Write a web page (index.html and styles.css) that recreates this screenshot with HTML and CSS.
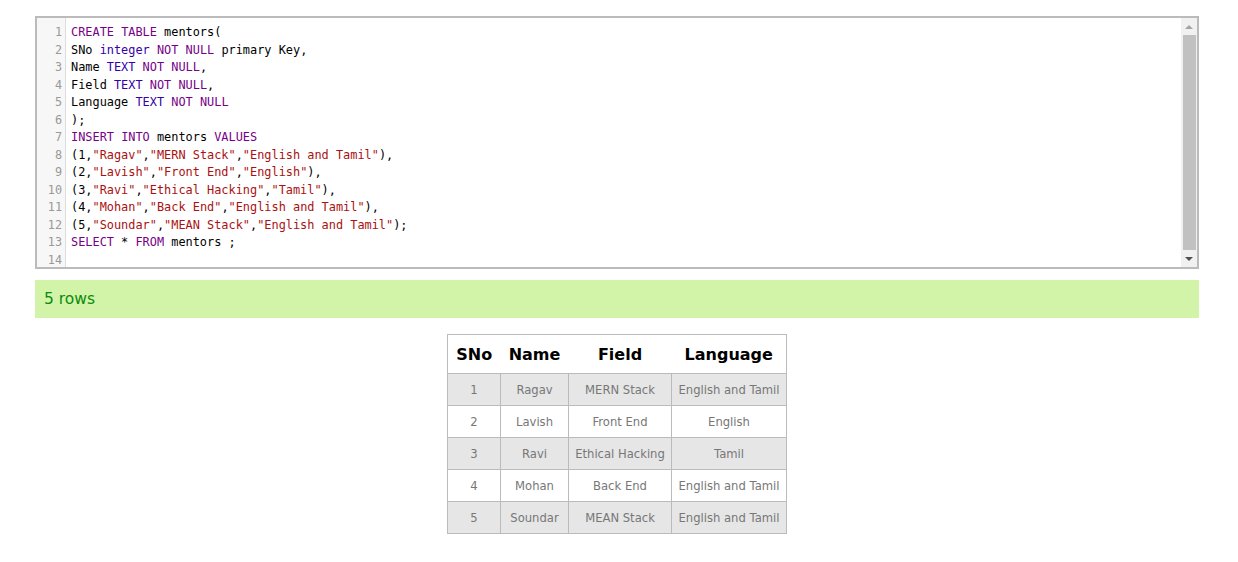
FILE: index.html
```html
<!DOCTYPE html>
<html>
<head>
<meta charset="utf-8">
<link rel="stylesheet" href="styles.css">
</head>
<body>
<div class="page">
  <div class="editor">
    <div class="gutter">
      <div>1</div><div>2</div><div>3</div><div>4</div><div>5</div><div>6</div><div>7</div><div>8</div><div>9</div><div>10</div><div>11</div><div>12</div><div>13</div><div>14</div>
    </div>
    <div class="code">
      <div class="ln"><span class="kw">CREATE</span> <span class="kw">TABLE</span> mentors(</div>
      <div class="ln">SNo <span class="ty">integer</span> <span class="kw">NOT</span> <span class="kw">NULL</span> primary Key,</div>
      <div class="ln">Name <span class="ty">TEXT</span> <span class="kw">NOT</span> <span class="kw">NULL</span>,</div>
      <div class="ln">Field <span class="ty">TEXT</span> <span class="kw">NOT</span> <span class="kw">NULL</span>,</div>
      <div class="ln">Language <span class="ty">TEXT</span> <span class="kw">NOT</span> <span class="kw">NULL</span></div>
      <div class="ln">);</div>
      <div class="ln"><span class="kw">INSERT</span> <span class="kw">INTO</span> mentors <span class="kw">VALUES</span></div>
      <div class="ln">(1,<span class="st">"Ragav"</span>,<span class="st">"MERN Stack"</span>,<span class="st">"English and Tamil"</span>),</div>
      <div class="ln">(2,<span class="st">"Lavish"</span>,<span class="st">"Front End"</span>,<span class="st">"English"</span>),</div>
      <div class="ln">(3,<span class="st">"Ravi"</span>,<span class="st">"Ethical Hacking"</span>,<span class="st">"Tamil"</span>),</div>
      <div class="ln">(4,<span class="st">"Mohan"</span>,<span class="st">"Back End"</span>,<span class="st">"English and Tamil"</span>),</div>
      <div class="ln">(5,<span class="st">"Soundar"</span>,<span class="st">"MEAN Stack"</span>,<span class="st">"English and Tamil"</span>);</div>
      <div class="ln"><span class="kw">SELECT</span> * <span class="kw">FROM</span> mentors ;</div>
      <div class="ln">&nbsp;</div>
    </div>
    <div class="scrollbar">
      <div class="arrow up"></div>
      <div class="thumb"></div>
      <div class="arrow down"></div>
    </div>
  </div>

  <div class="result">5 rows</div>

  <div class="table-wrap">
    <table class="results">
      <colgroup>
        <col class="c1"><col class="c2"><col class="c3"><col class="c4">
      </colgroup>
      <thead>
        <tr><th>SNo</th><th>Name</th><th>Field</th><th>Language</th></tr>
      </thead>
      <tbody>
        <tr class="odd"><td>1</td><td>Ragav</td><td>MERN Stack</td><td>English and Tamil</td></tr>
        <tr><td>2</td><td>Lavish</td><td>Front End</td><td>English</td></tr>
        <tr class="odd"><td>3</td><td>Ravi</td><td>Ethical Hacking</td><td>Tamil</td></tr>
        <tr><td>4</td><td>Mohan</td><td>Back End</td><td>English and Tamil</td></tr>
        <tr class="odd"><td>5</td><td>Soundar</td><td>MEAN Stack</td><td>English and Tamil</td></tr>
      </tbody>
    </table>
  </div>
</div>
</body>
</html>
```
FILE: styles.css
```css
html, body {
  margin: 0;
  padding: 0;
  background: #fff;
}
.page {
  padding: 16px 39px 0 35px;
  font-family: "DejaVu Sans", Verdana, sans-serif;
}
.editor {
  display: flex;
  height: 249px;
  border: 2px solid #bbbbbb;
  background: #fff;
  overflow: hidden;
}
.gutter {
  width: 29px;
  background: #f7f7f7;
  border-right: 1px solid #dddddd;
  padding-top: 6px;
  font-family: "DejaVu Sans Mono", "Liberation Mono", monospace;
  font-size: 11.8px;
  line-height: 17.5px;
  color: #999999;
  text-align: right;
  box-sizing: border-box;
}
.gutter div {
  padding-right: 3px;
  height: 17.5px;
}
.code {
  flex: 1;
  padding: 6px 0 0 5px;
  font-family: "DejaVu Sans Mono", "Liberation Mono", monospace;
  font-size: 11.9px;
  line-height: 17.5px;
  color: #000;
}
.ln {
  white-space: pre;
  height: 17.5px;
}
.kw { color: #770088; }
.ty { color: #3300aa; }
.st { color: #aa1111; }
.scrollbar {
  width: 16px;
  background: #f1f1f1;
  display: flex;
  flex-direction: column;
  align-items: center;
}
.arrow {
  height: 17px;
  width: 16px;
  display: flex;
  align-items: center;
  justify-content: center;
}
.arrow.up::before {
  content: "";
  border-left: 4px solid transparent;
  border-right: 4px solid transparent;
  border-bottom: 4px solid #a3a3a3;
}
.arrow.down::before {
  content: "";
  border-left: 4px solid transparent;
  border-right: 4px solid transparent;
  border-top: 4px solid #505050;
}
.thumb {
  flex: 1;
  width: 13px;
  background: #c1c1c1;
}
.result {
  margin-top: 11px;
  height: 38px;
  background: #d2f4a9;
  color: #0c8a0c;
  font-size: 15.5px;
  line-height: 38px;
  padding-left: 9px;
}
.table-wrap {
  display: flex;
  justify-content: center;
  margin-top: 16px;
}
.results {
  border-collapse: collapse;
  border: 1px solid #bbbbbb;
  table-layout: fixed;
  width: 339px;
}
.c1 { width: 53px; }
.c2 { width: 68px; }
.c3 { width: 103px; }
.c4 { width: 115px; }
.results th {
  height: 38px;
  padding: 0;
  font-size: 16px;
  font-weight: bold;
  color: #000;
  text-align: center;
  border-bottom: 1px solid #bbbbbb;
}
.results td {
  height: 31px;
  padding: 0;
  border: 1px solid #bbbbbb;
  font-size: 11.6px;
  color: #777777;
  text-align: center;
  white-space: nowrap;
}
.results tr.odd td {
  background: #e6e6e6;
}
```
